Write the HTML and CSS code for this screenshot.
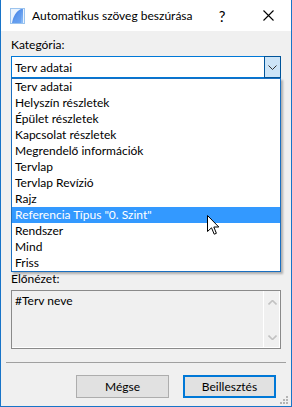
FILE: index.html
```html
<!DOCTYPE html>
<html lang="hu">
<head>
<meta charset="utf-8">
<title>Automatikus szöveg beszúrása</title>
<link rel="stylesheet" href="styles.css">
</head>
<body>
<div class="dialog">
  <div class="titlebar">
    <svg class="app-icon" width="15" height="16" viewBox="0 0 15 16">
      <defs>
        <linearGradient id="g1" x1="0" y1="0" x2="1" y2="1">
          <stop offset="0" stop-color="#2d6fe0"/>
          <stop offset="1" stop-color="#8fc0f8"/>
        </linearGradient>
      </defs>
      <rect x="0.5" y="0.5" width="14" height="15" fill="#eaf3fd" stroke="#9cc4ee"/>
      <path d="M2 15 C3 9 6 3 11 1 L13 1 L13 15 Z" fill="url(#g1)"/>
      <path d="M5 15 C6 10 8 5 11 2 L11 15 Z" fill="#5b98ee" opacity="0.6"/>
    </svg>
    <span class="title">Automatikus szöveg beszúrása</span>
    <span class="tb-btn help">?</span>
    <span class="tb-btn close">
      <svg width="11" height="11" viewBox="0 0 11 11"><path d="M0.5 0.5 L10.5 10.5 M10.5 0.5 L0.5 10.5" stroke="#000" stroke-width="1.1"/></svg>
    </span>
  </div>
  <div class="content">
    <div class="label">Kategória:</div>
    <div class="combo-wrap">
      <div class="combo">
        <span class="combo-value">Terv adatai</span>
        <span class="combo-btn">
          <svg width="9" height="5" viewBox="0 0 9 5"><path d="M0.5 0.5 L4.5 4.5 L8.5 0.5" fill="none" stroke="#333" stroke-width="1"/></svg>
        </span>
      </div>
      <ul class="dropdown">
        <li>Terv adatai</li>
        <li>Helyszín részletek</li>
        <li>Épület részletek</li>
        <li>Kapcsolat részletek</li>
        <li>Megrendelő információk</li>
        <li>Tervlap</li>
        <li>Tervlap Revízió</li>
        <li>Rajz</li>
        <li class="selected">Referencia Típus "0. Szint"</li>
        <li>Rendszer</li>
        <li>Mind</li>
        <li>Friss</li>
      </ul>
    </div>
    <div class="hidden-area"></div>
    <div class="label label-preview">Előnézet:</div>
    <div class="preview">
      <div class="preview-text">#Terv neve</div>
      <div class="scrollbar">
        <svg width="9" height="5" viewBox="0 0 9 5"><path d="M0.5 4.5 L4.5 0.5 L8.5 4.5" fill="none" stroke="#c2c2c2" stroke-width="1.6"/></svg>
        <svg width="9" height="5" viewBox="0 0 9 5"><path d="M0.5 0.5 L4.5 4.5 L8.5 0.5" fill="none" stroke="#c2c2c2" stroke-width="1.6"/></svg>
      </div>
    </div>
    <div class="separator"></div>
    <div class="buttons">
      <button class="btn">Mégse</button>
      <button class="btn primary">Beillesztés</button>
    </div>
  </div>
  <svg class="grip" width="9" height="9" viewBox="0 0 9 9">
    <rect x="6" y="0" width="2" height="2" fill="#b4b4b4"/>
    <rect x="3" y="3" width="2" height="2" fill="#b4b4b4"/>
    <rect x="6" y="3" width="2" height="2" fill="#b4b4b4"/>
    <rect x="0" y="6" width="2" height="2" fill="#b4b4b4"/>
    <rect x="3" y="6" width="2" height="2" fill="#b4b4b4"/>
    <rect x="6" y="6" width="2" height="2" fill="#b4b4b4"/>
  </svg>
  <svg class="cursor" width="13" height="21" viewBox="0 0 13 21">
    <path d="M0.5 0.5 L0.5 16.5 L4.5 12.8 L7.2 19.2 L9.4 18.3 L6.8 12 L11.8 12 Z" fill="#fff" stroke="#000" stroke-width="1" stroke-linejoin="miter"/>
  </svg>
</div>
</body>
</html>
```
FILE: styles.css
```css
* { box-sizing: border-box; }
html, body { margin: 0; padding: 0; }
body {
  width: 292px;
  height: 407px;
  overflow: hidden;
  font-family: Lato, "Noto Sans", sans-serif;
  font-size: 12px;
  color: #000;
}
.dialog {
  position: relative;
  width: 292px;
  height: 407px;
  border: 1px solid #1874c8;
  border-top: none;
  background: #f0f0f0;
  display: flex;
  flex-direction: column;
}
.titlebar {
  height: 31px;
  background: #fff;
  display: flex;
  align-items: center;
  flex: none;
}
.app-icon { margin-left: 9px; flex: none; }
.title {
  margin-left: 7px;
  font-size: 12px;
  flex: 1;
  white-space: nowrap;
}
.tb-btn {
  width: 45px;
  height: 31px;
  display: flex;
  align-items: center;
  justify-content: center;
  flex: none;
}
.help { font-size: 15px; padding-right: 3px; }
.content {
  flex: 1;
  padding: 6px 10px 0;
  display: flex;
  flex-direction: column;
}
.label { line-height: 15px; height: 15px; white-space: nowrap; }
.combo-wrap { position: relative; margin-top: 4px; }
.combo {
  height: 22px;
  border: 1px solid #0078d7;
  background: #fff;
  display: flex;
  align-items: center;
}
.combo-value { flex: 1; padding-left: 3px; line-height: 15px; }
.combo-btn {
  width: 17px;
  height: 22px;
  margin: -1px -1px -1px 0;
  background: #cce4f7;
  border: 1px solid #005499;
  display: flex;
  align-items: center;
  justify-content: center;
}
.combo-btn svg { margin-top: 1px; }
.dropdown {
  position: absolute;
  left: 0;
  top: 100%;
  width: 270px;
  margin: 0;
  padding: 0;
  list-style: none;
  background: #fff;
  border: 1px solid #1a6fc0;
  box-shadow: 2px 2px 2px rgba(0, 0, 0, 0.28);
  z-index: 2;
}
.dropdown li {
  height: 16px;
  line-height: 16px;
  padding-left: 3px;
  white-space: nowrap;
}
.dropdown li.selected { background: #3399ff; color: #fff; }
.hidden-area { height: 194px; flex: none; }
.label-preview { line-height: 13px; height: 13px; }
.preview {
  margin-top: 5px;
  height: 59px;
  border: 1px solid #8a8a8a;
  box-shadow: inset -1px -1px 0 #fff;
  display: flex;
  flex: none;
}
.preview-text { flex: 1; padding: 2px 0 0 3px; line-height: 15px; }
.scrollbar {
  width: 17px;
  border-left: 1px solid #fff;
  display: flex;
  flex-direction: column;
  justify-content: space-between;
  align-items: center;
  padding: 9px 0 8px;
}
.separator {
  height: 1px;
  background: #a0a0a0;
  margin: 13px -5px 0;
  flex: none;
}
.buttons {
  margin-top: 12px;
  display: flex;
  justify-content: flex-end;
  gap: 14px;
  padding-right: 5px;
}
.btn {
  width: 93px;
  height: 23px;
  font-family: Lato, "Noto Sans", sans-serif;
  font-size: 12px;
  color: #000;
  background: #e1e1e1;
  border: 1px solid #adadad;
  padding: 0;
  line-height: 15px;
}
.btn.primary { border: 2px solid #0078d7; }
.grip { position: absolute; right: 2px; bottom: 1px; }
.cursor { position: absolute; left: 206px; top: 215px; z-index: 5; }
```
